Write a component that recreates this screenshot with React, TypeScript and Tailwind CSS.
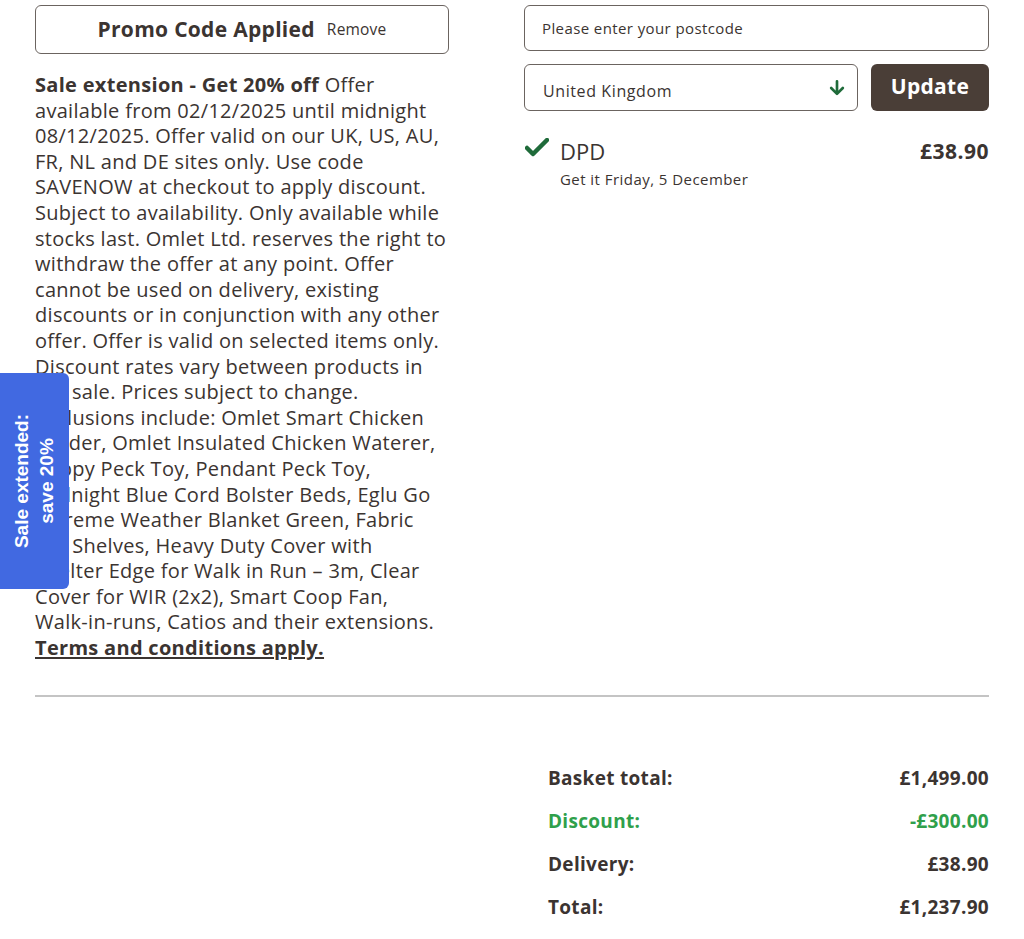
import React from "react";

const brown = "text-[#3b3431]";

const summary = [
  { label: "Basket total:", value: "£1,499.00", green: false },
  { label: "Discount:", value: "-£300.00", green: true },
  { label: "Delivery:", value: "£38.90", green: false },
  { label: "Total:", value: "£1,237.90", green: false },
];

// offer small print, broken the way the promo panel wraps it
const terms = [
  "available from 02/12/2025 until midnight",
  "08/12/2025. Offer valid on our UK, US, AU,",
  "FR, NL and DE sites only. Use code",
  "SAVENOW at checkout to apply discount.",
  "Subject to availability. Only available while",
  "stocks last. Omlet Ltd. reserves the right to",
  "withdraw the offer at any point. Offer",
  "cannot be used on delivery, existing",
  "discounts or in conjunction with any other",
  "offer. Offer is valid on selected items only.",
  "Discount rates vary between products in",
  "the sale. Prices subject to change.",
  "Exclusions include: Omlet Smart Chicken",
  "Feeder, Omlet Insulated Chicken Waterer,",
  "Poppy Peck Toy, Pendant Peck Toy,",
  "Midnight Blue Cord Bolster Beds, Eglu Go",
  "Extreme Weather Blanket Green, Fabric",
  "Cat Shelves, Heavy Duty Cover with",
  "Shelter Edge for Walk in Run – 3m, Clear",
  "Cover for WIR (2x2), Smart Coop Fan,",
  "Walk-in-runs, Catios and their extensions.",
];

const App: React.FC = () => {
  return (
    <div className={`relative min-h-[939px] bg-white ${brown} font-['Open_Sans',sans-serif]`}>
      {/* sale tab pinned to the left edge */}
      <div className="absolute left-0 top-[373px] flex h-[216px] w-[69px] items-center justify-center rounded-r-md bg-[#4169e1]">
        <div className="-rotate-90 whitespace-nowrap text-center text-[19px] font-bold leading-[25px] text-white font-['Liberation_Sans',sans-serif]">
          Sale extended:
          <br />
          save 20%
        </div>
      </div>

      <div className="flex gap-[75px] px-[35px] pt-[5px]">
        {/* promo column */}
        <div className="w-[414px] shrink-0">
          <div className="flex h-[49px] items-center justify-center gap-3 rounded-md border border-[#6b6460]">
            <span className="text-[21px] font-bold tracking-[0.3px]">Promo Code Applied</span>
            <span className="text-[15.5px] font-medium tracking-[0.2px]">Remove</span>
          </div>
          <div className="mt-[18px] whitespace-nowrap text-[20px] leading-[25.6px] font-medium tracking-[0.3px]">
            <div>
              <span className="font-bold">Sale extension - Get 20% off</span> Offer
            </div>
            {terms.map((line) => (
              <div key={line}>{line}</div>
            ))}
            <a className="font-bold underline underline-offset-2">Terms and conditions apply.</a>
          </div>
        </div>

        {/* delivery column */}
        <div className="flex-1">
          <div className="flex h-[46px] items-center rounded-md border border-[#6b6460] px-[17px] text-[15px] font-medium tracking-[0.4px]">
            Please enter your postcode
          </div>
          <div className="mt-[13px] flex gap-[13px]">
            <div className="flex h-[47px] flex-1 items-center justify-between rounded-md border border-[#6b6460] pl-[18px] pr-[10px] pt-[6px] text-[16px] font-medium tracking-[0.6px]">
              <span>United Kingdom</span>
              <svg width="20" height="20" viewBox="0 0 24 24" fill="none" stroke="#1f6b3a" strokeWidth="3.2" strokeLinecap="round" strokeLinejoin="round" className="-mt-[6px]">
                <path d="M12 4v15M5 12l7 7 7-7" />
              </svg>
            </div>
            <button className="h-[47px] w-[118px] rounded-md bg-[#4a3e37] pb-[2px] text-[21px] font-bold tracking-[0.3px] text-white">
              Update
            </button>
          </div>
          <div className="mt-[27px] flex items-start">
            <svg width="24" height="20" viewBox="0 0 24 20" className="ml-[1px]">
              <path d="M2 10l6 6L22 2" fill="none" stroke="#1f6b3a" strokeWidth="4.5" strokeLinecap="round" strokeLinejoin="round" />
            </svg>
            <div className="ml-[11px] flex-1">
              <div className="-mt-[3px] flex items-center justify-between">
                <span className="text-[22px] font-medium">DPD</span>
                <span className="text-[21px] font-bold tracking-[0.5px]">£38.90</span>
              </div>
              <div className="mt-[0px] text-[15px] font-medium tracking-[0.45px]">Get it Friday, 5 December</div>
            </div>
          </div>
        </div>
      </div>

      <div className="mx-[35px] mt-[34px] h-[2px] bg-[#c4c4c4]" />

      <div className="ml-[548px] mr-[35px] mt-[70px] flex flex-col gap-[20px]">
        {summary.map((row) => (
          <div
            key={row.label}
            className={`flex items-center justify-between text-[19px] font-bold leading-[23px] tracking-[0.3px] ${row.green ? "text-[#2fa04b]" : ""}`}
          >
            <span>{row.label}</span>
            <span>{row.value}</span>
          </div>
        ))}
      </div>
    </div>
  );
};

export default App;
